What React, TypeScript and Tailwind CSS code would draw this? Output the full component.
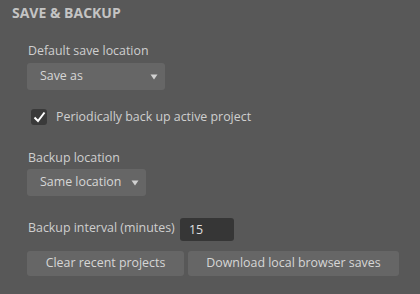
import React, { useState } from "react";

const Arrow = () => (
  <svg width="8" height="6" viewBox="0 0 8 6" className="ml-auto">
    <path d="M0.5 0.5 L7.5 0.5 L4 5.5 Z" fill="#d0d0d0" />
  </svg>
);

const App = () => {
  const [backup, setBackup] = useState(true);
  const [interval, setInterval] = useState("15");

  return (
    <div
      className="w-[420px] h-[294px] bg-[#585858] text-[#cfcfcf] overflow-hidden"
      style={{ fontFamily: '"Open Sans", "Noto Sans", sans-serif' }}
    >
      <h2 className="pl-3 pt-[3px] text-[14px] font-bold text-[#c4c4c4] leading-[20px]">
        SAVE &amp; BACKUP
      </h2>

      <div className="pl-[27px] pt-[18px] text-[12.4px]">
        <div className="leading-[20px] pl-[1px]">Default save location</div>
        <button className="mt-[2px] flex items-center w-[138px] h-[27px] bg-[#666666] rounded-[3px] pl-[13px] pr-[7px] text-[#d6d6d6]">
          Save as
          <Arrow />
        </button>

        <label className="mt-[17px] flex items-center gap-[9px] pl-[4px] cursor-pointer">
          <span
            onClick={() => setBackup(!backup)}
            className="w-[16px] h-[16px] rounded-[3px] bg-[#3a3a3a] flex items-center justify-center"
          >
            {backup && (
              <svg width="13" height="12" viewBox="0 0 13 12">
                <path d="M1.5 6.5 L5 10 L11.5 1.5" stroke="#ffffff" strokeWidth="2" fill="none" />
              </svg>
            )}
          </span>
          <span className="leading-[20px]">Periodically back up active project</span>
        </label>

        <div className="mt-[21px] leading-[20px] pl-[1px]">Backup location</div>
        <button className="mt-[1px] flex items-center w-[119px] h-[27px] bg-[#666666] rounded-[3px] pl-[13px] pr-[7px] text-[#d6d6d6]">
          Same location
          <Arrow />
        </button>

        <div className="mt-[22px] flex items-center pl-[1px]">
          <span className="leading-[20px] -mt-[3px] w-[152px]">Backup interval (minutes)</span>
          <input
            value={interval}
            onChange={(e) => setInterval(e.target.value)}
            className="w-[54px] h-[23px] bg-[#363636] rounded-[3px] pl-[9px] text-[#e0e0e0] outline-none"
          />
        </div>

        <div className="mt-[10px] flex gap-[4px]">
          <button className="w-[157px] h-[25px] bg-[#666666] rounded-[3px] text-[#d6d6d6]">
            Clear recent projects
          </button>
          <button className="w-[211px] h-[25px] bg-[#666666] rounded-[3px] text-[#d6d6d6]">
            Download local browser saves
          </button>
        </div>
      </div>
    </div>
  );
};

export default App;
